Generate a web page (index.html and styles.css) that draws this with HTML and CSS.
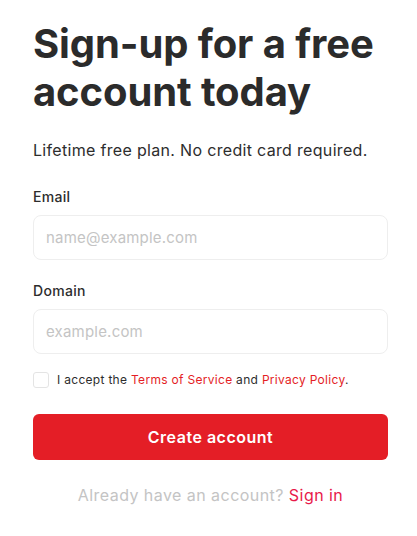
FILE: index.html
```html
<!DOCTYPE html>
<html lang="en">
<head>
<meta charset="utf-8">
<title>Sign up</title>
<link rel="stylesheet" href="styles.css">
</head>
<body>
<main class="page">
  <h1 class="title">Sign-up for a free account today</h1>
  <p class="lead">Lifetime free plan. No credit card required.</p>
  <form class="form">
    <label class="field">
      <span class="label">Email</span>
      <input class="input" type="email" placeholder="name@example.com">
    </label>
    <label class="field">
      <span class="label">Domain</span>
      <input class="input" type="text" placeholder="example.com">
    </label>
    <label class="terms">
      <span class="check"></span>
      <span class="terms-text">I accept the <a class="link" href="#">Terms of Service</a> and <a class="link" href="#">Privacy Policy</a>.</span>
    </label>
    <button class="submit" type="button">Create account</button>
    <p class="signin">Already have an account? <a class="signin-link" href="#">Sign in</a></p>
  </form>
</main>
</body>
</html>
```
FILE: styles.css
```css
* { box-sizing: border-box; }
html, body { margin: 0; padding: 0; background: #fff; }
body {
  font-family: "Inter", "Open Sans", sans-serif;
  color: #2d2d2d;
}
.page {
  width: 355px;
  margin-left: 33px;
  padding-top: 20px;
}
.title {
  margin: 0;
  font-size: 40px;
  line-height: 48px;
  font-weight: 700;
  color: #2b2b2b;
  letter-spacing: -0.1px;
}
.lead {
  margin: 22px 0 0;
  font-size: 16px;
  line-height: 24px;
  letter-spacing: 0.32px;
  color: #2d2d2d;
}
.form { display: flex; flex-direction: column; margin-top: 25px; }
.field { display: flex; flex-direction: column; margin-bottom: 21px; }
.label {
  font-size: 14px;
  line-height: 20px;
  font-weight: 500;
  letter-spacing: 0.3px;
  color: #2d2d2d;
  margin-bottom: 8px;
}
.input {
  height: 45px;
  border: 1px solid #eeeeee;
  border-radius: 8px;
  padding: 0 12px;
  font-family: inherit;
  font-size: 15px;
  letter-spacing: 0.2px;
  color: #2d2d2d;
  outline: none;
  background: #fff;
}
.input::placeholder { color: #c4c4c4; }
.terms {
  display: flex;
  align-items: center;
  gap: 8px;
  margin-top: -4px;
}
.check {
  width: 16px;
  height: 16px;
  border: 1px solid #e4e4e4;
  border-radius: 3px;
  flex: none;
}
.terms-text { font-size: 12px; line-height: 18px; letter-spacing: 0.3px; color: #2d2d2d; }
.link { color: #e41e26; text-decoration: none; }
.submit {
  margin-top: 25px;
  height: 46px;
  border: 0;
  border-radius: 6px;
  background: #e41e26;
  color: #fff;
  font-family: inherit;
  font-size: 16px;
  font-weight: 600;
  letter-spacing: 0.5px;
}
.signin {
  margin: 23px 0 0;
  text-align: center;
  font-size: 16px;
  line-height: 24px;
  letter-spacing: 0.45px;
  color: #c4c4c4;
}
.signin-link { color: #e8194a; text-decoration: none; }
```
